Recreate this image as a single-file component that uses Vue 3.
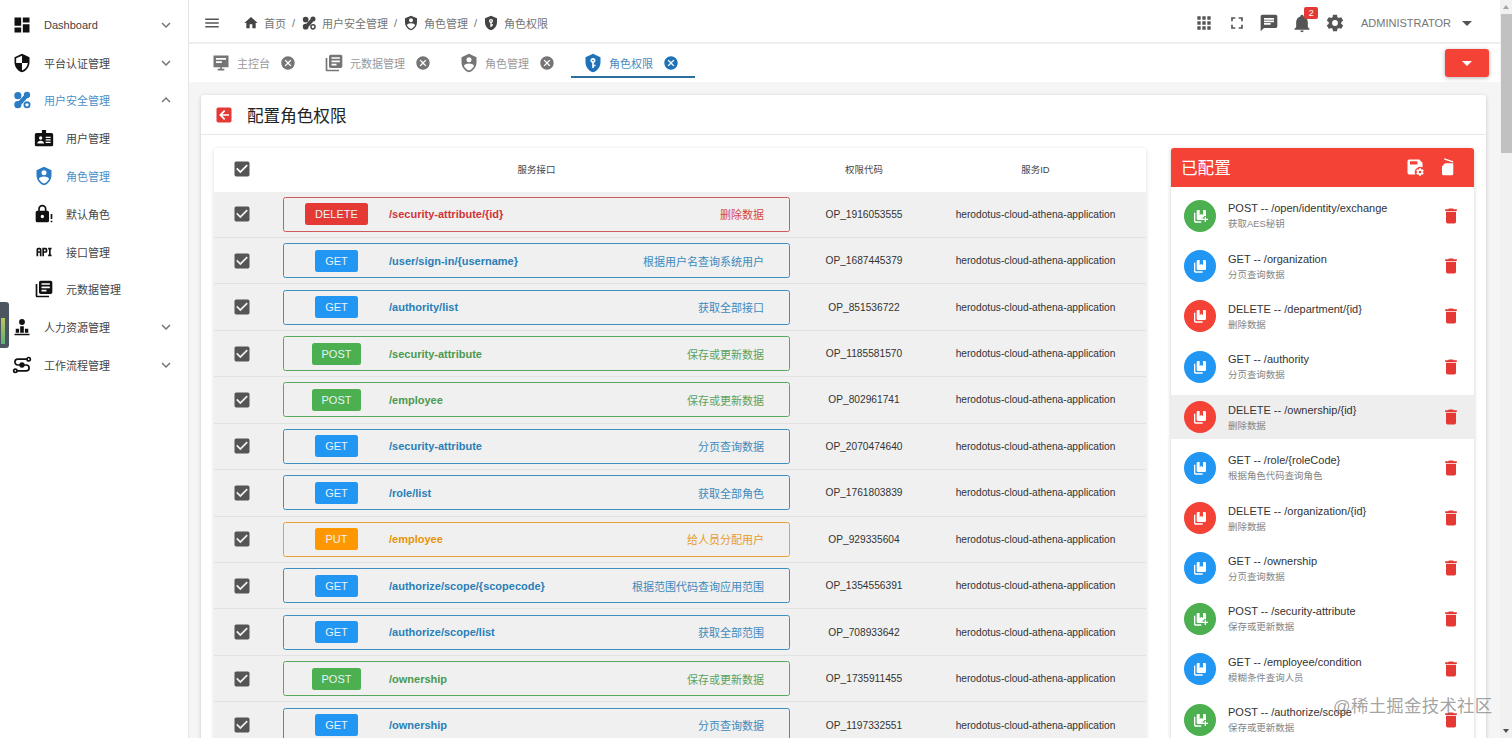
<script setup>
const cog = 'M12,15.5A3.5,3.5 0 0,1 8.5,12A3.5,3.5 0 0,1 12,8.5A3.5,3.5 0 0,1 15.5,12A3.5,3.5 0 0,1 12,15.5M19.43,12.97C19.47,12.65 19.5,12.33 19.5,12C19.5,11.67 19.47,11.34 19.43,11L21.54,9.37C21.73,9.22 21.78,8.95 21.66,8.73L19.66,5.27C19.54,5.05 19.27,4.96 19.05,5.05L16.56,6.05C16.04,5.66 15.5,5.32 14.87,5.07L14.5,2.42C14.46,2.18 14.25,2 14,2H10C9.75,2 9.54,2.18 9.5,2.42L9.13,5.07C8.5,5.32 7.96,5.66 7.44,6.05L4.95,5.05C4.73,4.96 4.46,5.05 4.34,5.27L2.34,8.73C2.21,8.95 2.27,9.22 2.46,9.37L4.57,11C4.53,11.34 4.5,11.67 4.5,12C4.5,12.33 4.53,12.65 4.57,12.97L2.46,14.63C2.27,14.78 2.21,15.05 2.34,15.27L4.34,18.73C4.46,18.95 4.73,19.03 4.95,18.95L7.44,17.94C7.96,18.34 8.5,18.68 9.13,18.93L9.5,21.58C9.54,21.82 9.75,22 10,22H14C14.25,22 14.46,21.82 14.5,21.58L14.87,18.93C15.5,18.67 16.04,18.34 16.56,17.94L19.05,18.95C19.27,19.03 19.54,18.95 19.66,18.73L21.66,15.27C21.78,15.05 21.73,14.78 21.54,14.63L19.43,12.97Z'
const i = {
  dashboard: 'M13,3V9H21V3M13,21H21V11H13M3,21H11V15H3M3,13H11V3H3V13Z',
  security: 'M12 1L3 5v6c0 5.55 3.84 10.74 9 12 5.16-1.26 9-6.45 9-12V5l-9-4zm0 10.99h7c-.53 4.12-3.28 7.79-7 8.94V12H5V6.3l7-3.11v8.8z',
  hub: 'M7 2.5a4.3 4.3 0 1 1 0 8.6 4.3 4.3 0 0 1 0-8.6z M18 2.2a3.8 3.8 0 1 1 0 7.6 3.8 3.8 0 0 1 0-7.6z M7 13.3a4.3 4.3 0 1 1 0 8.6 4.3 4.3 0 0 1 0-8.6z M15.5 5l4 3.5L10 19l-4-3.5z M18 13.6a4.2 4.2 0 1 1 0 8.4 4.2 4.2 0 0 1 0-8.4z M18 15.8a2 2 0 1 0 0 4 2 2 0 0 0 0-4z',
  badge: 'M3 6h6.5V2.5h5V6H21a2 2 0 0 1 2 2v12a2 2 0 0 1-2 2H3a2 2 0 0 1-2-2V8a2 2 0 0 1 2-2z M8 10a2 2 0 1 0 0 4 2 2 0 0 0 0-4z M4 18.5c0-2 2-3.3 4-3.3s4 1.3 4 3.3z M14 10.5h6V12h-6z M14 13.5h6V15h-6z M14 16.5h6V18h-6z',
  shieldAccount: 'M12,1L3,5V11C3,16.55 6.84,21.74 12,23C17.16,21.74 21,16.55 21,11V5L12,1M12,5A3,3 0 0,1 15,8A3,3 0 0,1 12,11A3,3 0 0,1 9,8A3,3 0 0,1 12,5M17.13,17C15.92,18.85 14.11,20.24 12,20.92C9.89,20.24 8.08,18.85 6.87,17C6.53,16.5 6.24,16 6,15.47C6,13.82 8.71,12.47 12,12.47C15.29,12.47 18,13.79 18,15.47C17.76,16 17.47,16.5 17.13,17Z',
  lockAlert: 'M10,17A2,2 0 0,0 12,15C12,13.89 11.1,13 10,13A2,2 0 0,0 8,15A2,2 0 0,0 10,17M16,8A2,2 0 0,1 18,10V20A2,2 0 0,1 16,22H4A2,2 0 0,1 2,20V10C2,8.89 2.9,8 4,8H5V6A5,5 0 0,1 10,1A5,5 0 0,1 15,6V8H16M10,3A3,3 0 0,0 7,6V8H13V6A3,3 0 0,0 10,3M20,12H22V18H20V12M20,20H22V22H20V20Z',
  api: 'M7 7H5A2 2 0 0 0 3 9V17H5V13H7V17H9V9A2 2 0 0 0 7 7M7 11H5V9H7M14 7H10V17H12V13H14A2 2 0 0 0 16 11V9A2 2 0 0 0 14 7M14 11H12V9H14M20 9V15H21V17H17V15H18V9H17V7H21V9Z',
  books: 'M4 6H2v14c0 1.1.9 2 2 2h14v-2H4V6zm16-4H8c-1.1 0-2 .9-2 2v12c0 1.1.9 2 2 2h12c1.1 0 2-.9 2-2V4c0-1.1-.9-2-2-2zm-1 9H9V9h10v2zm-4 4H9v-2h6v2zm4-8H9V5h10v2z',
  human: 'M12 2.5a3.5 3.5 0 1 1 0 7 3.5 3.5 0 0 1 0-7z M9.8 11h4.4v8h-4.4z M4.5 14h4v5h-4z M15.5 14h4v5h-4z M3 20h18v2H3z',
  menu: 'M3,6H21V8H3V6M3,11H21V13H3V11M3,16H21V18H3V16Z',
  home: 'M10,20V14H14V20H19V12H22L12,3L2,12H5V20H10Z',
  down: 'M7.41,8.58L12,13.17L16.59,8.58L18,10L12,16L6,10L7.41,8.58Z',
  up: 'M7.41,15.41L12,10.83L16.59,15.41L18,14L12,8L6,14L7.41,15.41Z',
  close: 'M12,2C17.53,2 22,6.47 22,12C22,17.53 17.53,22 12,22C6.47,22 2,17.53 2,12C2,6.47 6.47,2 12,2M15.59,7L12,10.59L8.41,7L7,8.41L10.59,12L7,15.59L8.41,17L12,13.41L15.59,17L17,15.59L13.41,12L17,8.41L15.59,7Z',
  monitor: 'M3 3h18v14h-8v2h3v2H8v-2h3v-2H3z M6 6v2h12V6z M6 10v2h7v-2z',
  shieldKey: 'M12,8A1,1 0 0,1 13,9A1,1 0 0,1 12,10A1,1 0 0,1 11,9A1,1 0 0,1 12,8M21,11C21,16.55 17.16,21.74 12,23C6.84,21.74 3,16.55 3,11V5L12,1L21,5V11M12,6A3,3 0 0,0 9,9C9,10.31 9.83,11.42 11,11.83V18H13V16H15V14H13V11.83C14.17,11.42 15,10.31 15,9A3,3 0 0,0 12,6Z',
  apps: 'M16,20H20V16H16M16,14H20V10H16M10,8H14V4H10M16,8H20V4H16M10,14H14V10H10M4,14H8V10H4M4,20H8V16H4M10,20H14V16H10M4,8H8V4H4V8Z',
  fullscreen: 'M5,5H10V7H7V10H5V5M14,5H19V10H17V7H14V5M17,14H19V19H14V17H17V14M10,17V19H5V14H7V17H10Z',
  message: 'M20,2H4A2,2 0 0,0 2,4V22L6,18H20A2,2 0 0,0 22,16V4C22,2.89 21.1,2 20,2M6,9H18V11H6M14,14H6V12H14M18,8H6V6H18',
  bell: 'M21,19V20H3V19L5,17V11C5,7.9 7.03,5.17 10,4.29C10,4.19 10,4.1 10,4A2,2 0 0,1 12,2A2,2 0 0,1 14,4C14,4.1 14,4.19 14,4.29C16.97,5.17 19,7.9 19,11V17L21,19M14,21A2,2 0 0,1 12,23A2,2 0 0,1 10,21',
  cog,
  check: 'M10,17L5,12L6.41,10.58L10,14.17L17.59,6.58L19,8M19,3H5C3.89,3 3,3.89 3,5V19A2,2 0 0,0 5,21H19A2,2 0 0,0 21,19V5C21,3.89 20.1,3 19,3Z',
  trash: 'M19,4H15.5L14.5,3H9.5L8.5,4H5V6H19M6,19A2,2 0 0,0 8,21H16A2,2 0 0,0 18,19V7H6V19Z',
  back: 'M19,3H5C3.89,3 3,3.89 3,5V19A2,2 0 0,0 5,21H19A2,2 0 0,0 21,19V5C21,3.89 20.1,3 19,3M18,11V13H10L13.5,16.5L12.08,17.92L6.16,12L12.08,6.08L13.5,7.5L10,11H18Z',
  save: 'M5 3a2 2 0 0 0-2 2v14a2 2 0 0 0 2 2h7.4a6.5 6.5 0 0 1 8.6-8.6V7l-4-4z M6 5h9v4H6z',
  restore: 'M6 11.5L9.5 7.5h10V20a2 2 0 0 1-2 2h-9.5a2 2 0 0 1-2-2z M9 1.5l10.5 3.5-.6 1.6L8.4 3z',
  getBook: 'M5 7H3v13a2 2 0 0 0 2 2h11v-2H5z M9 3h2.5v7.5L14 9l2.5 1.5V3H19a2 2 0 0 1 2 2v11a2 2 0 0 1-2 2H9a2 2 0 0 1-2-2V5a2 2 0 0 1 2-2z',
  postBook: 'M5 7H3v13a2 2 0 0 0 2 2h9v-2H5z M9 3h2.5v7.5L14 9l2.5 1.5V3H19a2 2 0 0 1 2 2v7h-3v2h-2v4H9a2 2 0 0 1-2-2V5a2 2 0 0 1 2-2z M19 13h2v3h3v2h-3v3h-2v-3h-3v-2h3z'
}

const nav = [
  { label: 'Dashboard', icon: i.dashboard, arrow: i.down },
  { label: '平台认证管理', icon: i.security, arrow: i.down },
  { label: '用户安全管理', icon: i.hub, arrow: i.up, active: true },
  { label: '用户管理', icon: i.badge, sub: true },
  { label: '角色管理', icon: i.shieldAccount, sub: true, active: true },
  { label: '默认角色', icon: i.lockAlert, sub: true },
  { label: '接口管理', icon: i.api, sub: true },
  { label: '元数据管理', icon: i.books, sub: true },
  { label: '人力资源管理', icon: i.human, arrow: i.down },
  { label: '工作流程管理', flow: true, arrow: i.down }
]
const crumbs = [
  { label: '首页', icon: i.home },
  { label: '用户安全管理', icon: i.hub },
  { label: '角色管理', icon: i.shieldAccount },
  { label: '角色权限', icon: i.shieldKey }
]
const tabs = [
  { label: '主控台', icon: i.monitor },
  { label: '元数据管理', icon: i.books },
  { label: '角色管理', icon: i.shieldAccount },
  { label: '角色权限', icon: i.shieldKey, active: true }
]
const rows = [
  ['DELETE', '/security-attribute/{id}', '删除数据', 'OP_1916053555'],
  ['GET', '/user/sign-in/{username}', '根据用户名查询系统用户', 'OP_1687445379'],
  ['GET', '/authority/list', '获取全部接口', 'OP_851536722'],
  ['POST', '/security-attribute', '保存或更新数据', 'OP_1185581570'],
  ['POST', '/employee', '保存或更新数据', 'OP_802961741'],
  ['GET', '/security-attribute', '分页查询数据', 'OP_2070474640'],
  ['GET', '/role/list', '获取全部角色', 'OP_1761803839'],
  ['PUT', '/employee', '给人员分配用户', 'OP_929335604'],
  ['GET', '/authorize/scope/{scopecode}', '根据范围代码查询应用范围', 'OP_1354556391'],
  ['GET', '/authorize/scope/list', '获取全部范围', 'OP_708933642'],
  ['POST', '/ownership', '保存或更新数据', 'OP_1735911455'],
  ['GET', '/ownership', '分页查询数据', 'OP_1197332551']
]
const items = [
  ['POST', '/open/identity/exchange', '获取AES秘钥'],
  ['GET', '/organization', '分页查询数据'],
  ['DELETE', '/department/{id}', '删除数据'],
  ['GET', '/authority', '分页查询数据'],
  ['DELETE', '/ownership/{id}', '删除数据', true],
  ['GET', '/role/{roleCode}', '根据角色代码查询角色'],
  ['DELETE', '/organization/{id}', '删除数据'],
  ['GET', '/ownership', '分页查询数据'],
  ['POST', '/security-attribute', '保存或更新数据'],
  ['GET', '/employee/condition', '模糊条件查询人员'],
  ['POST', '/authorize/scope', '保存或更新数据']
]
</script>

<template>
  <div class="app">
    <aside class="side">
      <div v-for="n in nav" :key="n.label" class="nav" :class="{ sub: n.sub, on: n.active }">
        <svg v-if="n.flow" class="nav-ic flow" viewBox="0 0 24 24">
          <path d="M18 5H7a3.5 3.5 0 0 0 0 7h10a3.5 3.5 0 0 1 0 7H6" />
          <circle cx="20" cy="5" r="2" />
          <circle cx="4" cy="19" r="2" />
          <circle class="dot" cx="12" cy="12" r="2.2" />
        </svg>
        <svg v-else class="nav-ic" viewBox="0 0 24 24"><path :fill-rule="n.icon === i.hub ? 'nonzero' : 'evenodd'" :d="n.icon" /></svg>
        <span class="nav-t">{{ n.label }}</span>
        <svg v-if="n.arrow" class="nav-arrow" viewBox="0 0 24 24"><path :d="n.arrow" /></svg>
      </div>
    </aside>

    <div class="main">
      <header class="top">
        <svg class="burger" viewBox="0 0 24 24"><path :d="i.menu" /></svg>
        <nav class="crumbs">
          <template v-for="(c, idx) in crumbs" :key="c.label">
            <span v-if="idx" class="slash">/</span>
            <svg class="crumb-ic" viewBox="0 0 24 24"><path :fill-rule="c.icon === i.hub ? 'nonzero' : 'evenodd'" :d="c.icon" /></svg>
            <span class="crumb-t">{{ c.label }}</span>
          </template>
        </nav>
        <div class="tools">
          <svg viewBox="0 0 24 24"><path :d="i.apps" /></svg>
          <svg viewBox="0 0 24 24"><path :d="i.fullscreen" /></svg>
          <svg viewBox="0 0 24 24"><path :d="i.message" /></svg>
          <div class="bell">
            <svg viewBox="0 0 24 24"><path :d="i.bell" /></svg>
            <span class="badge">2</span>
          </div>
          <svg viewBox="0 0 24 24"><path :d="i.cog" /></svg>
        </div>
        <span class="user">ADMINISTRATOR</span>
        <span class="caret"></span>
      </header>

      <div class="tabbar">
        <div v-for="t in tabs" :key="t.label" class="tab" :class="{ on: t.active }">
          <svg class="tab-ic" viewBox="0 0 24 24"><path fill-rule="evenodd" :d="t.icon" /></svg>
          <span class="tab-t">{{ t.label }}</span>
          <svg class="tab-x" viewBox="0 0 24 24"><path :d="i.close" /></svg>
        </div>
        <button class="drop"><span class="caret white"></span></button>
      </div>

      <div class="content">
        <section class="card">
          <div class="card-head">
            <svg class="back" viewBox="0 0 24 24"><path :d="i.back" /></svg>
            <h1>配置角色权限</h1>
          </div>
          <div class="card-body">
            <div class="table">
              <div class="tr th">
                <svg class="chk" viewBox="0 0 24 24"><path :d="i.check" /></svg>
                <span>服务接口</span>
                <span>权限代码</span>
                <span>服务ID</span>
              </div>
              <div v-for="(r, idx) in rows" :key="idx" class="tr td">
                <svg class="chk" viewBox="0 0 24 24"><path :d="i.check" /></svg>
                <div class="chip" :class="r[0].toLowerCase()">
                  <span class="m-cell"><span class="method">{{ r[0] }}</span></span>
                  <span class="path">{{ r[1] }}</span>
                  <span class="desc">{{ r[2] }}</span>
                </div>
                <span>{{ r[3] }}</span>
                <span>herodotus-cloud-athena-application</span>
              </div>
            </div>

            <div class="panel">
              <div class="panel-head">
                <span>已配置</span>
                <svg viewBox="0 0 24 24">
                  <path fill-rule="evenodd" :d="i.save" />
                  <path :d="i.cog" transform="translate(12.5 12.5) scale(.46)" />
                </svg>
                <svg viewBox="0 0 24 24"><path :d="i.restore" /></svg>
              </div>
              <div class="list">
                <div v-for="(it, idx) in items" :key="idx" class="item" :class="{ hover: it[3] }">
                  <span class="ava" :class="it[0].toLowerCase()">
                    <svg viewBox="0 0 24 24"><path fill-rule="evenodd" :d="it[0] === 'POST' ? i.postBook : i.getBook" /></svg>
                  </span>
                  <div class="item-text">
                    <div class="item-title">{{ it[0] }} -- {{ it[1] }}</div>
                    <div class="item-sub">{{ it[2] }}</div>
                  </div>
                  <svg class="trash" viewBox="0 0 24 24"><path :d="i.trash" /></svg>
                </div>
              </div>
            </div>
          </div>
        </section>
      </div>
    </div>

    <div class="scrollbar">
      <span class="arrow-up"></span>
      <span class="thumb"></span>
      <span class="arrow-down"></span>
    </div>

    <div class="widget"><span></span></div>
    <div class="mark">@稀土掘金技术社区</div>
  </div>
</template>

<style>
html, body { margin: 0; overflow: hidden; background: #f5f5f5; }
</style>

<style scoped>
.app {
  display: flex;
  height: 738px;
  overflow: hidden;
  position: relative;
  font-family: "Liberation Sans", "Noto Sans CJK SC", sans-serif;
  font-size: 11px;
  color: #333;
  background: #f5f5f5;
}
svg { display: block; fill: currentColor; flex: none; }

.side {
  width: 188px;
  flex: none;
  padding-top: 6px;
  background: #fff;
  border-right: 1px solid #e4e4e4;
}
.nav {
  display: flex;
  align-items: center;
  height: 37.8px;
  padding-left: 12px;
  color: #111;
}
.nav.on { color: #2b7cc4; }
.nav-ic { width: 20px; height: 20px; }
.nav-t { margin-left: 12px; flex: 1; color: #444; }
.nav.on .nav-t { color: #4a90c8; }
.nav.sub { padding-left: 34px; }
.nav-arrow { width: 18px; height: 18px; color: #757575; margin-right: 13px; }
.flow { fill: none; stroke: currentColor; stroke-width: 2; }
.flow .dot { fill: currentColor; }

.main { flex: 1; min-width: 0; display: flex; flex-direction: column; }

.top {
  flex: none;
  display: flex;
  align-items: center;
  padding: 4px 0 0 14px;
  box-sizing: border-box;
  background: #fff;
  border-bottom: 2px solid #eee;
  height: 44px;
  color: #555;
}
.burger { width: 18px; height: 18px; }
.crumbs { display: flex; align-items: center; margin-left: 22px; flex: 1; }
.crumb-ic { width: 16px; height: 16px; margin-right: 5px; color: #444; }
.crumb-t { color: #757575; }
.slash { margin: 0 5.5px; color: #757575; width: 4px; text-align: center; }
.tools { display: flex; align-items: center; gap: 12.8px; color: #555; }
.tools svg { width: 20px; height: 20px; }
.bell { position: relative; }
.badge {
  position: absolute;
  left: 12px;
  top: -6px;
  width: 14px;
  height: 12px;
  background: #e53935;
  color: #fff;
  border-radius: 2px;
  font-size: 9px;
  line-height: 12px;
  text-align: center;
}
.user { margin-left: 16px; color: #757575; font-size: 11px; }
.caret {
  width: 0;
  height: 0;
  border-left: 5px solid transparent;
  border-right: 5px solid transparent;
  border-top: 5px solid #555;
  margin: 0 28px 0 11px;
}
.caret.white { border-top-color: #fff; margin: 0; display: block; }

.tabbar {
  height: 38px;
  flex: none;
  display: flex;
  align-items: flex-start;
  background: #fff;
  padding-left: 10px;
  position: relative;
}
.tab {
  display: flex;
  align-items: center;
  padding: 5px 16px 0 12px;
  color: #757575;
  height: 34px;
  box-sizing: border-box;
  border-bottom: 2px solid transparent;
}
.tab.on { color: #1f72b8; border-bottom-color: #2a6f9e; }
.tab-ic { width: 20px; height: 20px; }
.tab-t { margin: 0 10px 0 6px; color: #999; }
.tab.on .tab-t { color: #4a8abc; }
.tab-x { width: 16px; height: 16px; }
.drop {
  position: absolute;
  left: 1256px;
  top: 5px;
  width: 44px;
  height: 28px;
  border: 0;
  padding: 0;
  border-radius: 3px;
  background: #f44336;
  display: flex;
  align-items: center;
  justify-content: center;
  box-shadow: 0 1px 4px rgba(0, 0, 0, .3);
}

.content { flex: 1; min-height: 0; padding: 13px 14px 0 12px; }
.card {
  background: #fff;
  border-radius: 3px;
  box-shadow: 0 1px 4px rgba(0, 0, 0, .18);
}
.card-head {
  display: flex;
  align-items: center;
  height: 40px;
  padding-left: 13px;
  border-bottom: 1px solid #e8e8e8;
  box-sizing: border-box;
}
.back { width: 20px; height: 20px; color: #e53935; }
h1 { margin: 0 0 0 13px; font-size: 16.6px; font-weight: 400; color: #222; }
.card-body { display: flex; align-items: flex-start; gap: 25px; padding: 13px 12px 0 13px; }

.table {
  width: 932px;
  flex: none;
  box-shadow: 0 1px 4px rgba(0, 0, 0, .15);
  border-radius: 3px;
  background: #fff;
}
.tr {
  display: grid;
  grid-template-columns: 56px 533px 122px 221px;
  align-items: center;
  justify-items: center;
  font-size: 10.2px;
  color: #333;
}
.th { height: 43.5px; padding-bottom: 2px; box-sizing: border-box; font-size: 9.45px; color: #444; }
.td {
  height: 46.45px;
  box-sizing: border-box;
  background: #f0f0f0;
  border-bottom: 1px solid #e2e2e2;
}
.chk { width: 20px; height: 20px; color: #555; }

.chip {
  width: 507px;
  height: 35px;
  box-sizing: border-box;
  border: 1px solid;
  border-radius: 2.5px;
  display: flex;
  align-items: center;
  font-size: 11px;
  color: var(--text);
  border-color: var(--line);
}
.chip.get { --bg: #2196f3; --text: #2a7fb8; --line: #3f8fbe; }
.chip.post { --bg: #4caf50; --text: #4a9a50; --line: #5aa860; }
.chip.delete { --bg: #e53935; --text: #d0343a; --line: #cf5a5e; }
.chip.put { --bg: #ff9800; --text: #e8930a; --line: #e8a23a; }
.m-cell { width: 105px; flex: none; display: flex; justify-content: center; }
.method {
  display: block;
  padding: 0 10px;
  min-width: 23px;
  height: 22px;
  line-height: 22px;
  text-align: center;
  background: var(--bg);
  color: #e8f3fb;
  border-radius: 2.5px;
  font-size: 11px;
}
.path { flex: 1; font-weight: 700; }
.desc { margin-right: 25px; opacity: .9; }

.panel {
  width: 303px;
  flex: none;
  background: #fff;
  box-shadow: 0 1px 4px rgba(0, 0, 0, .2);
  border-radius: 3px 3px 0 0;
}
.panel-head {
  height: 39px;
  background: #f44336;
  color: #fff;
  display: flex;
  align-items: center;
  padding: 0 17px 2px 10px;
  box-sizing: border-box;
  border-radius: 3px 3px 0 0;
  font-size: 16.6px;
}
.panel-head span { flex: 1; }
.panel-head svg { width: 20px; height: 20px; margin-left: 12px; }
.list { padding-top: 6.5px; display: flex; flex-direction: column; gap: 6px; }
.item {
  height: 44.4px;
  display: flex;
  align-items: center;
  padding: 0 13px;
}
.item.hover { background: #eee; }
.ava {
  width: 32px;
  height: 32px;
  border-radius: 50%;
  display: flex;
  align-items: center;
  justify-content: center;
  color: #fff;
  flex: none;
}
.ava svg { width: 16px; height: 16px; }
.ava.get { background: #2196f3; }
.ava.post { background: #4caf50; }
.ava.delete { background: #f44336; }
.item-text { flex: 1; margin-left: 12px; min-width: 0; }
.item-title { font-size: 11px; color: #333; line-height: 14px; white-space: nowrap; }
.item-sub { font-size: 9.45px; color: #858585; line-height: 13px; margin-top: 2px; }
.trash { width: 20px; height: 20px; color: #e53935; }

.scrollbar {
  width: 12px;
  flex: none;
  background: #f1f1f1;
  display: flex;
  flex-direction: column;
  align-items: center;
  padding-top: 5px;
  box-sizing: border-box;
}
.thumb { width: 11px; height: 139px; background: #c1c1c1; margin-top: 5px; flex: none; }
.arrow-up, .arrow-down {
  width: 0;
  height: 0;
  border-left: 3.5px solid transparent;
  border-right: 3.5px solid transparent;
  flex: none;
}
.arrow-up { border-bottom: 4px solid #a3a3a3; }
.arrow-down { border-top: 4px solid #505050; margin-top: auto; margin-bottom: 5px; }

.widget {
  position: absolute;
  left: 0;
  top: 302px;
  width: 9px;
  height: 46px;
  background: #4b5661;
  border-radius: 0 3px 3px 0;
}
.widget span {
  position: absolute;
  left: 1px;
  top: 16px;
  width: 4px;
  height: 26px;
  background: linear-gradient(#b9c75a, #5fae7a);
}
.mark {
  position: absolute;
  left: 1333px;
  top: 695px;
  font-size: 17.4px;
  line-height: 22px;
  letter-spacing: .3px;
  color: rgba(110, 110, 110, .65);
  white-space: nowrap;
}
</style>
